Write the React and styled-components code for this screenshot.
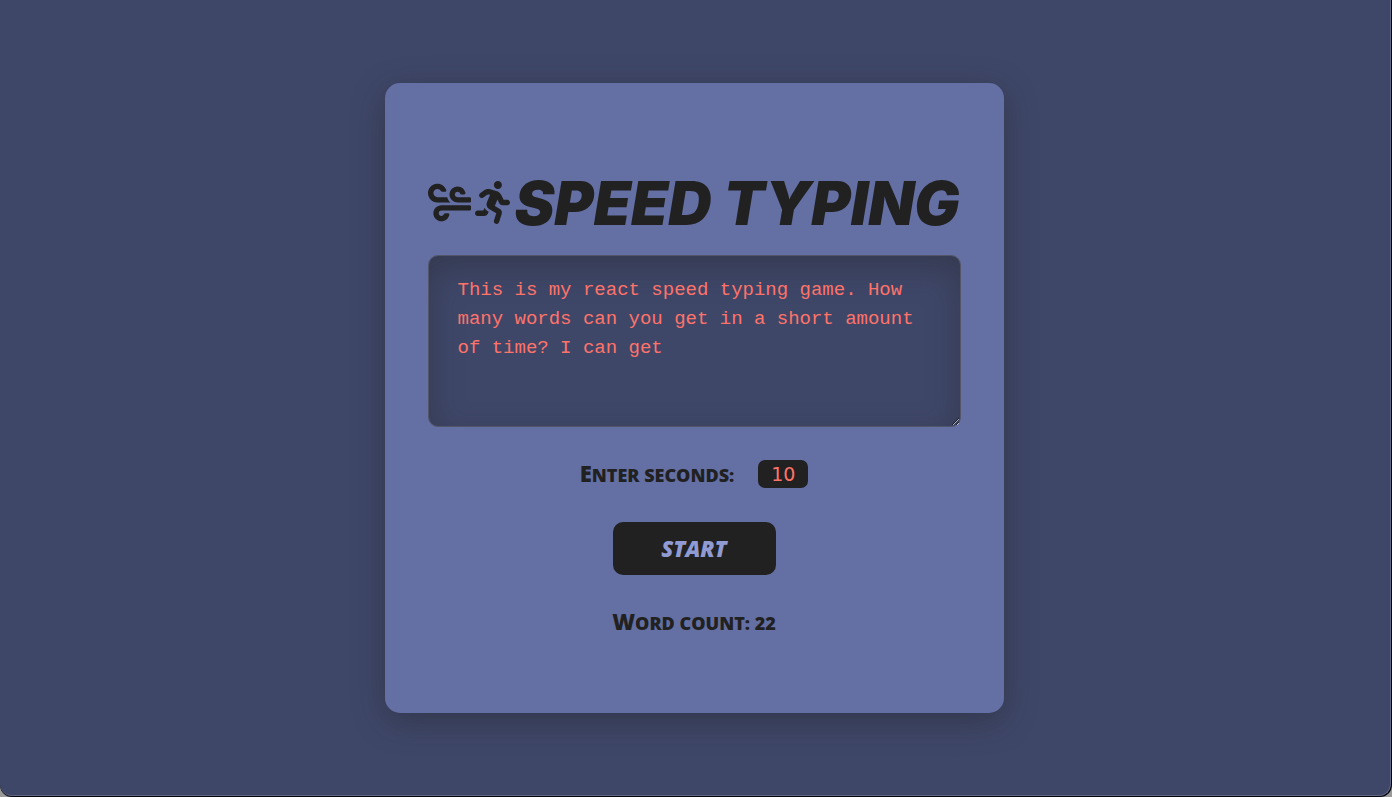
import React, { useState } from "react";
import styled, { createGlobalStyle } from "styled-components";
import { FaRunning, FaWind } from "react-icons/fa";

const GlobalStyle = createGlobalStyle`
  *, *::before, *::after { box-sizing: border-box; }
  body {
    margin: 0;
    background: #9a9a9a;
    color: #212121;
    font-family: "Open Sans", Lato, sans-serif;
  }
`;

const Frame = styled.div`
  min-height: 100vh;
  display: flex;
  padding: 0 1px 1px 0;
  background: #05060c;
  border-radius: 0 0 12px 12px;
`;

const Page = styled.main`
  flex: 1;
  display: flex;
  align-items: center;
  justify-content: center;
  padding: 24px 2px 24px 0;
  background: #3f4769;
  border: solid #626784;
  border-width: 0 1px 1px 0;
  border-radius: 0 0 12px 12px;
`;

const Card = styled.form`
  display: flex;
  flex-direction: column;
  align-items: center;
  width: 100%;
  max-width: 619px;
  padding: 88px 43px 75px;
  background: #646fa3;
  border-radius: 15px;
  box-shadow: 0 8px 32px rgba(33, 33, 33, 0.4);
`;

const Title = styled.h1`
  display: flex;
  align-items: center;
  margin: 0 0 20px;
  font-family: Inter, "Open Sans", sans-serif;
  font-size: 60px;
  font-weight: 900;
  font-style: italic;
  line-height: 64px;
  white-space: nowrap;
`;

const WindIcon = styled(FaWind)`
  width: 43px;
  height: 43px;
  margin-right: 4px;
  transform: rotate(180deg);
`;

const RunnerIcon = styled(FaRunning)`
  width: 35px;
  height: 43px;
  margin-right: 4px;
`;

const TypingArea = styled.textarea`
  width: 100%;
  height: 172px;
  padding: 20px 29px;
  border: 1px solid #535669;
  border-radius: 10px;
  outline: none;
  background: #3f4769;
  box-shadow: inset 0 12px 32px rgba(33, 33, 33, 0.35);
  color: #ff7369;
  font: 19px/29px "Liberation Mono", monospace;
`;

const SecondsRow = styled.div`
  display: flex;
  align-items: center;
  gap: 24px;
  margin: 31px 0 32px;
`;

const Label = styled.label`
  font-size: 18px;
  font-weight: 800;
  line-height: 30px;
  text-transform: uppercase;

  &::first-letter {
    font-size: 22px;
  }
`;

const WordCount = styled(Label).attrs({ as: "output" })`
  margin-top: 31px;
`;

const SecondsInput = styled.input`
  width: 50px;
  height: 28px;
  padding: 0;
  border: 0;
  border-radius: 7px;
  background: #212121;
  color: #ff7369;
  font: 19px/28px "DejaVu Sans", sans-serif;
  text-align: center;
`;

const StartButton = styled.button`
  width: 163px;
  height: 53px;
  border: 0;
  border-radius: 10px;
  background: #212121;
  color: #919bd3;
  font: italic 800 22px/30px "Open Sans", sans-serif;
`;

const SAMPLE =
  "This is my react speed typing game. How many words can you get in a short amount of time? I can get";

export default function App() {
  const [text, setText] = useState(SAMPLE);
  const [seconds, setSeconds] = useState("10");
  const words = text.trim().split(/\s+/).filter(Boolean).length;

  return (
    <Frame>
      <GlobalStyle />
      <Page>
        <Card onSubmit={(e) => e.preventDefault()}>
          <Title>
            <WindIcon aria-hidden="true" />
            <RunnerIcon aria-hidden="true" />
            SPEED TYPING
          </Title>
          <TypingArea
            aria-label="Typing area"
            spellCheck={false}
            value={text}
            onChange={(e) => setText(e.target.value)}
          />
          <SecondsRow>
            <Label htmlFor="seconds">Enter seconds:</Label>
            <SecondsInput
              id="seconds"
              inputMode="numeric"
              value={seconds}
              onChange={(e) => setSeconds(e.target.value)}
            />
          </SecondsRow>
          <StartButton type="submit">START</StartButton>
          <WordCount>Word count: {words}</WordCount>
        </Card>
      </Page>
    </Frame>
  );
}
